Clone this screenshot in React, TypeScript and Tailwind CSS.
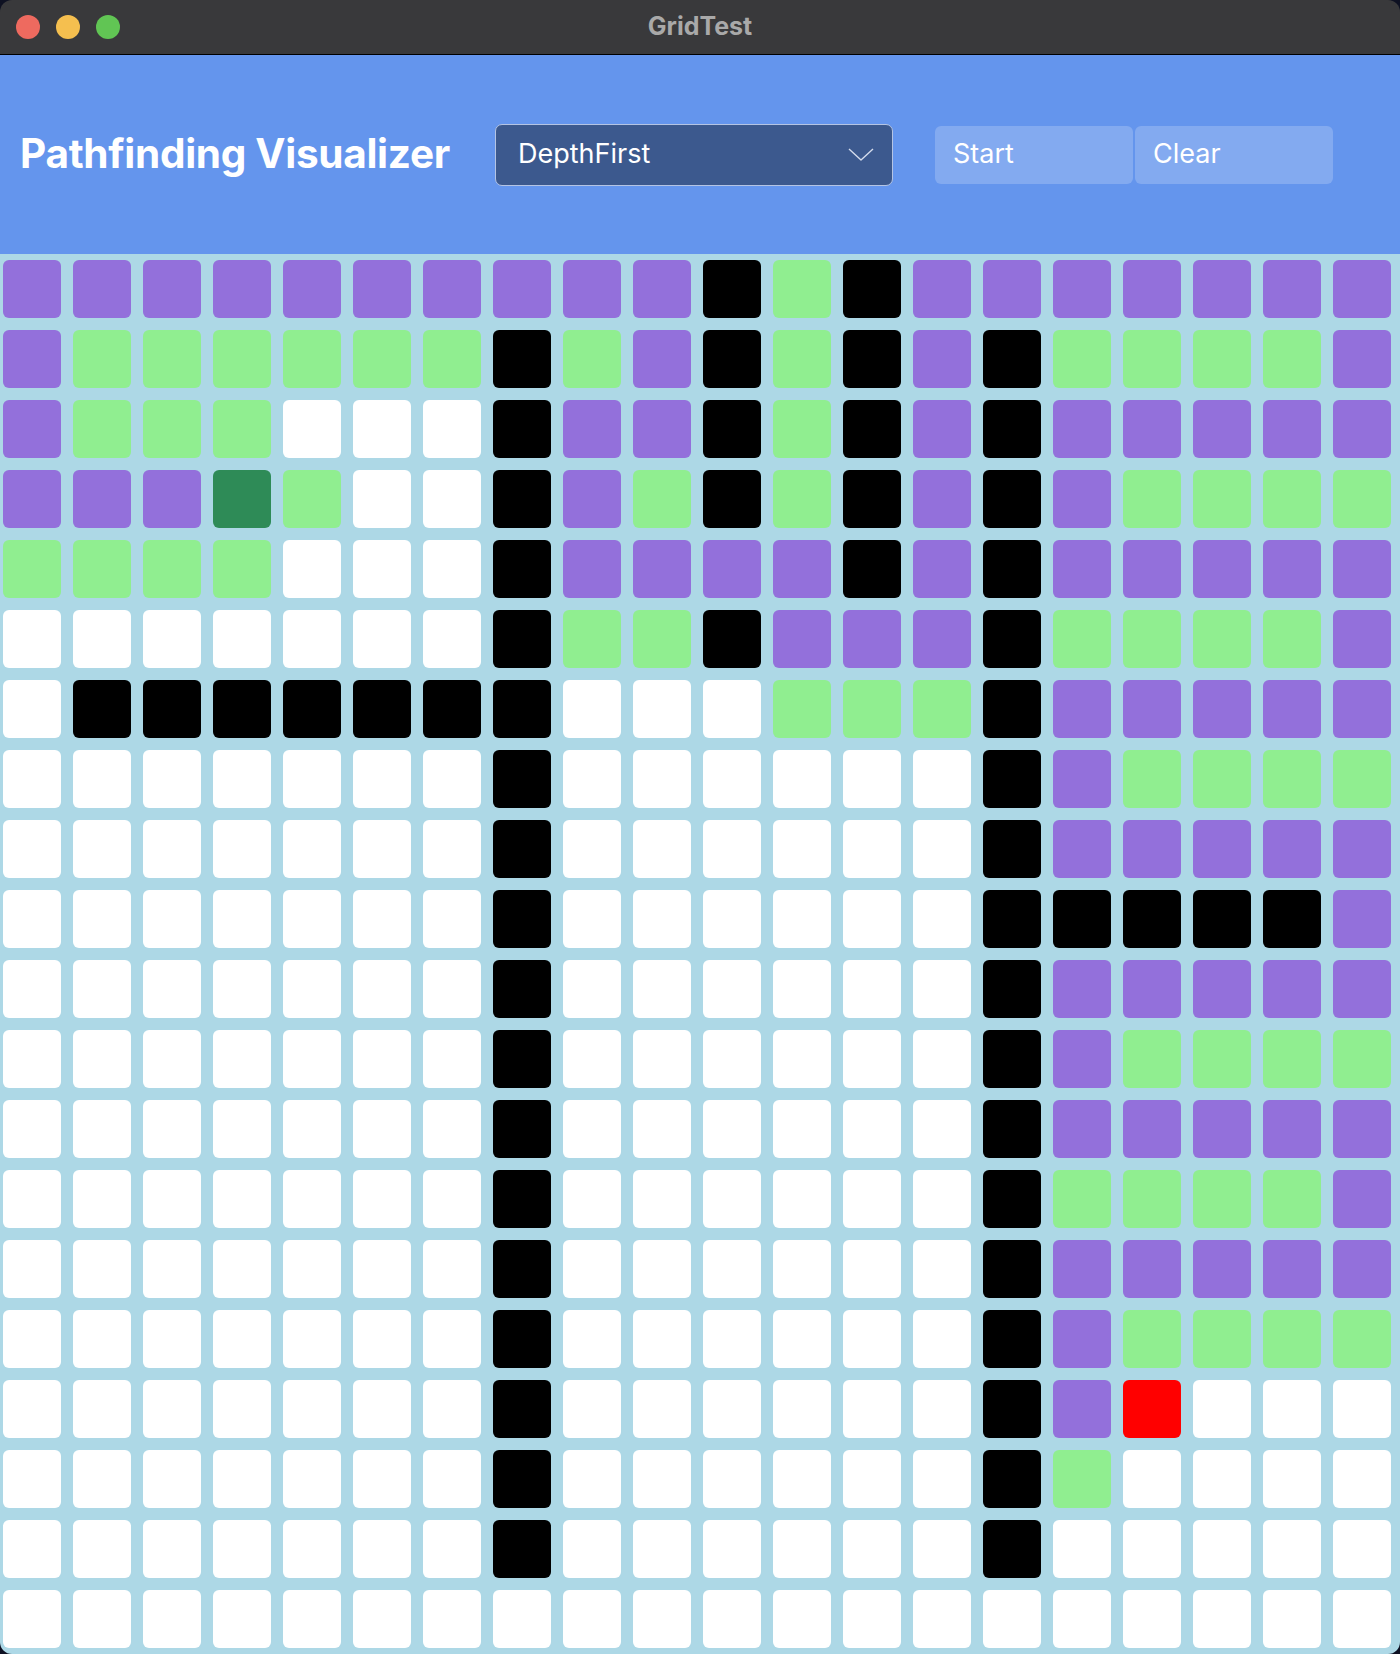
// P = visited, G = frontier, B = wall, W = empty, D = start, R = target
const GRID: string[] = [
  "PPPPPPPPPPBGBPPPPPPP",
  "PGGGGGGBGPBGBPBGGGGP",
  "PGGGWWWBPPBGBPBPPPPP",
  "PPPDGWWBPGBGBPBPGGGG",
  "GGGGWWWBPPPPBPBPPPPP",
  "WWWWWWWBGGBPPPBGGGGP",
  "WBBBBBBBWWWGGGBPPPPP",
  "WWWWWWWBWWWWWWBPGGGG",
  "WWWWWWWBWWWWWWBPPPPP",
  "WWWWWWWBWWWWWWBBBBBP",
  "WWWWWWWBWWWWWWBPPPPP",
  "WWWWWWWBWWWWWWBPGGGG",
  "WWWWWWWBWWWWWWBPPPPP",
  "WWWWWWWBWWWWWWBGGGGP",
  "WWWWWWWBWWWWWWBPPPPP",
  "WWWWWWWBWWWWWWBPGGGG",
  "WWWWWWWBWWWWWWBPRWWW",
  "WWWWWWWBWWWWWWBGWWWW",
  "WWWWWWWBWWWWWWBWWWWW",
  "WWWWWWWWWWWWWWWWWWWW",
];

const cellColor: Record<string, string> = {
  P: "bg-[#9370db]",
  G: "bg-[#90ee90]",
  B: "bg-black",
  W: "bg-white",
  D: "bg-[#2e8b57]",
  R: "bg-[#ff0000]",
};

export default function App() {
  return (
    <div className="w-[1400px] h-[1654px] bg-[#0e1122] font-['Inter','Noto_Sans',sans-serif]">
      <div className="w-full h-full rounded-[12px] overflow-hidden flex flex-col">
        {/* Title bar */}
        <div className="h-[55px] flex-shrink-0 bg-[#39393b] border-b border-black flex items-center relative">
          <div className="flex items-center gap-[16px] pl-[16px]">
            <span className="w-[24px] h-[24px] rounded-full bg-[#ee6a5f]"></span>
            <span className="w-[24px] h-[24px] rounded-full bg-[#f5bf4f]"></span>
            <span className="w-[24px] h-[24px] rounded-full bg-[#61c554]"></span>
          </div>
          <div className="absolute inset-0 flex items-center justify-center pointer-events-none">
            <span className="text-[25px] font-bold text-[#a9a9a9]">GridTest</span>
          </div>
        </div>

        {/* Header */}
        <header className="h-[199px] flex-shrink-0 bg-[#6495ed] flex items-center">
          <h1 className="ml-[20px] w-[475px] text-[40.5px] font-bold text-white tracking-[-0.3px]">
            Pathfinding Visualizer
          </h1>
          <div className="w-[398px] h-[62px] rounded-[7px] border-[1.5px] border-[#b4c4e4] bg-[#3c598e] flex items-center justify-between pl-[22px] pr-[18px]">
            <span className="text-[27px] text-white">DepthFirst</span>
            <svg width="26" height="15" viewBox="0 0 26 15" fill="none" className="text-[#d4dcec]">
              <polyline points="1,2 13,13 25,2" stroke="currentColor" strokeWidth="1.4" strokeLinejoin="round" />
            </svg>
          </div>
          <div className="ml-[42px] flex gap-[2px]">
            <button className="w-[198px] h-[58px] rounded-[6px] bg-white/20 text-left pl-[18px] text-[27px] text-white">
              Start
            </button>
            <button className="w-[198px] h-[58px] rounded-[6px] bg-white/20 text-left pl-[18px] text-[27px] text-white">
              Clear
            </button>
          </div>
        </header>

        {/* Grid */}
        <div className="flex-1 bg-[#add8e6] pl-[3px] pt-[6px]">
          <div className="grid grid-cols-[repeat(20,58px)] auto-rows-[58px] gap-[12px]">
            {GRID.flatMap((row, r) =>
              row.split("").map((c, i) => (
                <div key={`${r}-${i}`} className={`rounded-[6px] ${cellColor[c]}`}></div>
              ))
            )}
          </div>
        </div>
      </div>
    </div>
  );
}
